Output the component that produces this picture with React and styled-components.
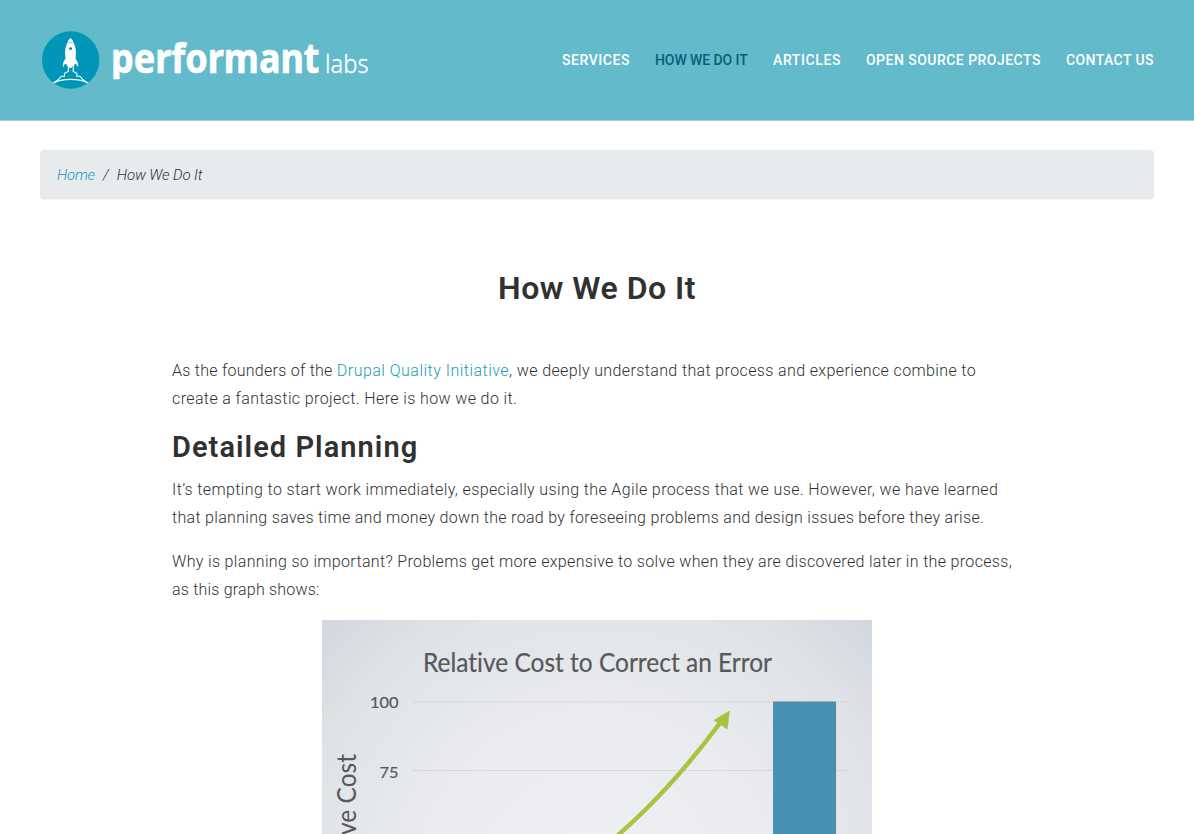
import React from "react";
import styled, { createGlobalStyle } from "styled-components";

const Global = createGlobalStyle`
  * { box-sizing: border-box; }
  body {
    margin: 0;
    background: #fff;
    color: #313131;
    font: 300 16px/28px Roboto, "Liberation Sans", sans-serif;
  }
`;

const Page = styled.div`
  height: 100vh;
  overflow: hidden;
`;

const Header = styled.header`
  display: flex;
  align-items: center;
  justify-content: space-between;
  height: 121px;
  padding: 0 40px;
  background: #62baca;
  border-bottom: 1px solid #9dd3de;
`;

const LogoSvg = styled.svg`
  display: block;
  width: 330px;
  height: 60px;
`;

const Nav = styled.nav`
  display: flex;
  gap: 25px;
`;

const NavLink = styled.a`
  width: ${(p) => p.$w}px;
  color: ${(p) => (p.$active ? "#086078" : "#fff")};
  font-size: 14px;
  font-weight: 500;
  letter-spacing: ${(p) => p.$ls}px;
  text-transform: uppercase;
  white-space: nowrap;
`;

const Breadcrumb = styled.nav`
  display: flex;
  align-items: center;
  gap: 8px;
  height: 49px;
  margin: 29px 40px 0;
  padding: 0 17px;
  border-radius: 4px;
  background: #e7ebee;
  box-shadow: 0 1px 0 -0.5px #e7ebee;
  font-size: 15px;
  font-style: italic;
`;

const Crumb = styled.span`
  letter-spacing: ${(p) => p.$ls || 0}px;
`;

const Link = styled.a`
  color: #219cb9;
  letter-spacing: ${(p) => p.$ls || 0}px;
`;

const Article = styled.main`
  width: 850px;
  margin: 68px auto 0;
`;

const Title = styled.h1`
  margin: 0 0 48px;
  font-size: 32px;
  font-weight: 600;
  line-height: 42px;
  letter-spacing: 0.5px;
  text-align: center;
`;

const Heading = styled.h2`
  margin: -1px 0 9px;
  font-size: 29px;
  font-weight: 600;
  line-height: 39px;
  letter-spacing: 1.05px;
`;

const Paragraph = styled.p`
  margin: 0 0 16px;
`;

const Line = styled.span`
  display: block;
  white-space: nowrap;
  letter-spacing: ${(p) => p.$ls}px;
`;

const Run = styled.span`
  letter-spacing: ${(p) => p.$ls}px;
`;

const ChartSvg = styled.svg`
  display: block;
  width: 550px;
  height: 413px;
  margin: 0 auto;
  font-variant-ligatures: none;
`;

const NAV = [
  { label: "Services", w: 68, ls: 0.55 },
  { label: "How We Do It", w: 93, ls: -0.08, active: true },
  { label: "Articles", w: 68, ls: 0.6 },
  { label: "Open Source Projects", w: 175, ls: 0.47 },
  { label: "Contact Us", w: 88, ls: 0.4 },
];

function Logo() {
  return (
    <LogoSvg viewBox="0 0 330 60" role="img" aria-label="Performant Labs">
      <defs>
        <clipPath id="disc"><circle cx="30.7" cy="30" r="28.7" /></clipPath>
        <clipPath id="wordmark"><rect x="64" y="0" width="266" height="49.2" /></clipPath>
      </defs>
      <circle cx="30.7" cy="30" r="28.7" fill="#0096b7" />
      <g clipPath="url(#disc)">
        <path
          fill="#fff"
          d="M30.5 8 C32 9.5 33 10.5 33.3 12.2 C35 15 35.9 18.5 35.9 22 L35.6 29 C37.4 31 38.2 32.5 38.2 36 L37.6 37 C36.8 34.8 36.2 34 34.8 33.8 L34 36 H32.2 L31.5 38 H29.5 L28.8 36 H27 L26.2 33.8 C24.8 34 24.2 34.8 23.4 37 L22.8 36 C22.8 32.5 23.8 31 25.4 29 L25.1 22 C25.1 18.5 26 15 27.7 12.2 C28 10.5 29 9.5 30.5 8 Z"
        />
        <path d="M27.8 12.6 H33.2" stroke="#8accdd" strokeWidth="1" />
        <circle cx="30.6" cy="18.6" r="1.4" fill="#0076a0" />
        <g fill="none" stroke="#fff" strokeWidth="1.1">
          <path d="M28.4 35 V41.5 L24.5 43.3 V46.2 H21.6 C19.8 46.7 19.8 49 18.5 49.5 L13 53.2" />
          <path d="M33.2 35 V41.5 L36.8 43.3 V46.2 H39.6 C41.4 46.7 41.4 49 42.7 49.5 L48.2 53.2" />
          <path d="M14 52.7 C23.5 48.3 38 48.3 47.4 52.7" />
        </g>
      </g>
      <g fill="#fff" fontFamily='"Noto Sans", sans-serif' clipPath="url(#wordmark)">
        <text x="71" y="42.6" fontSize="42" fontWeight="700" stroke="#fff" strokeWidth="0.7" textLength="208.5" lengthAdjust="spacingAndGlyphs">performant</text>
        <text x="285" y="42.8" fontSize="26" fontWeight="300" stroke="#fff" strokeWidth="0.3" textLength="43.5" lengthAdjust="spacingAndGlyphs">labs</text>
      </g>
    </LogoSvg>
  );
}

function CostChart() {
  return (
    <ChartSvg viewBox="0 0 550 413" role="img" aria-label="Relative Cost to Correct an Error">
      <defs>
        <radialGradient id="backdrop" gradientUnits="userSpaceOnUse" cx="275" cy="270" r="410">
          <stop offset="0" stopColor="#f0f1f4" />
          <stop offset="0.45" stopColor="#e9ebee" />
          <stop offset="0.75" stopColor="#dfe2e6" />
          <stop offset="1" stopColor="#cdd4dc" />
        </radialGradient>
      </defs>
      <rect width="550" height="413" fill="url(#backdrop)" />
      <g stroke="#c9cbd0" strokeWidth="1.2" strokeDasharray="1.5 1">
        <path d="M91 82H526M91 150.5H526M91 219H526" />
      </g>
      <rect x="451" y="82" width="62.5" height="331" fill="#4792b3" />
      <path d="M451 82H513.5V413" fill="none" stroke="#5d8298" strokeWidth="1" />
      <path d="M230 267 C302 216 350 168 401 99" fill="none" stroke="#a7c43f" strokeWidth="4.4" />
      <path d="M407.8 90.5 L391.5 100.3 L405.5 109.5 Z" fill="#a7c43f" />
      <g fill="#56585a" fontFamily='"Lato", sans-serif' fontWeight="400">
        <text x="101" y="51.5" fontSize="26.5" stroke="#56585a" strokeWidth="0.2" textLength="349" lengthAdjust="spacingAndGlyphs">Relative Cost to Correct an Error</text>
        <g fontSize="15" stroke="#56585a" strokeWidth="0.2">
          <text x="48" y="88" textLength="28.5" lengthAdjust="spacingAndGlyphs">100</text>
          <text x="57.5" y="157.5" textLength="19" lengthAdjust="spacingAndGlyphs">75</text>
          <text x="57.5" y="226.5" textLength="19" lengthAdjust="spacingAndGlyphs">50</text>
        </g>
        <text transform="translate(33.5 275) rotate(-90)" fontSize="26.5" textLength="141" lengthAdjust="spacingAndGlyphs">Relative Cost</text>
      </g>
    </ChartSvg>
  );
}

export default function App() {
  return (
    <Page>
      <Global />
      <Header>
        <Logo />
        <Nav>
          {NAV.map((n) => (
            <NavLink key={n.label} $w={n.w} $ls={n.ls} $active={n.active}>{n.label}</NavLink>
          ))}
        </Nav>
      </Header>
      <Breadcrumb>
        <Link $ls={-0.25}>Home</Link>
        <Crumb>/</Crumb>
        <Crumb $ls={-0.1}>How We Do It</Crumb>
      </Breadcrumb>
      <Article>
        <Title>How We Do It</Title>
        <Paragraph>
          <Line $ls={0.26}>
            As the founders of the <Link $ls={0.48}>Drupal Quality Initiative</Link>
            <Run $ls={0.375}>, we deeply understand that process and experience combine to</Run>
          </Line>
          <Line $ls={0.38}>create a fantastic project. Here is how we do it.</Line>
        </Paragraph>
        <Heading>Detailed Planning</Heading>
        <Paragraph>
          <Line $ls={0.38}>It’s tempting to start work immediately, especially using the Agile process that we use. However, we have learned</Line>
          <Line $ls={0.31}>that planning saves time and money down the road by foreseeing problems and design issues before they arise.</Line>
        </Paragraph>
        <Paragraph>
          <Line $ls={0.335}>Why is planning so important? Problems get more expensive to solve when they are discovered later in the process,</Line>
          <Line $ls={0.2}>as this graph shows:</Line>
        </Paragraph>
        <CostChart />
      </Article>
    </Page>
  );
}
